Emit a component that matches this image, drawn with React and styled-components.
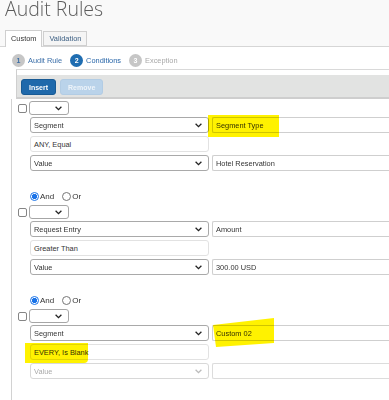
import React from "react";
import styled, { createGlobalStyle } from "styled-components";

const GlobalStyle = createGlobalStyle`
  html, body {
    margin: 0;
    padding: 0;
    background: #fff;
    overflow: hidden;
  }
  body {
    font-family: "Liberation Sans", Arial, sans-serif;
    color: #333;
  }
  * {
    box-sizing: border-box;
  }
`;

const conditions = [
  {
    join: null,
    field: "Segment",
    fieldValue: "Segment Type",
    fieldMark: "box",
    op: "ANY, Equal",
    value: "Hotel Reservation",
  },
  {
    join: "And",
    field: "Request Entry",
    fieldValue: "Amount",
    op: "Greater Than",
    value: "300.00 USD",
  },
  {
    join: "And",
    field: "Segment",
    fieldValue: "Custom 02",
    fieldMark: "slant",
    op: "EVERY, Is Blank",
    opMark: true,
    value: "",
    disabled: true,
  },
];

function Chevron({ disabled }) {
  return (
    <svg width="7" height="5" viewBox="0 0 7 5">
      <path
        d="M0.6 0.8 L3.5 3.7 L6.4 0.8"
        fill="none"
        stroke={disabled ? "#bbb" : "#222"}
        strokeWidth="1.3"
      />
    </svg>
  );
}

function Condition({ item }) {
  return (
    <ConditionBlock>
      {item.join && (
        <RadioRow>
          <Radio $checked />
          <RadioLabel>And</RadioLabel>
          <Radio />
          <RadioLabel>Or</RadioLabel>
        </RadioRow>
      )}
      <HeadRow>
        <Checkbox />
        <SmallSelect>
          <span />
          <Chevron />
        </SmallSelect>
      </HeadRow>
      <Fields>
        <FieldRow>
          <Select>
            <span>{item.field}</span>
            <Chevron />
          </Select>
          <Field>
            <Input>{item.fieldValue}</Input>
            {item.fieldMark === "box" && <MarkBox />}
            {item.fieldMark === "slant" && <MarkSlant />}
          </Field>
        </FieldRow>
        <FieldRow>
          <OpField>
            <TextBox>{item.op}</TextBox>
            {item.opMark && <MarkWide />}
          </OpField>
        </FieldRow>
        <FieldRow>
          <Select $disabled={item.disabled}>
            <span>Value</span>
            <Chevron disabled={item.disabled} />
          </Select>
          <Field>
            <Input $disabled={item.disabled}>{item.value}</Input>
          </Field>
        </FieldRow>
      </Fields>
    </ConditionBlock>
  );
}

export default function App() {
  return (
    <>
      <GlobalStyle />
      <Header>
        <Title>Audit Rules</Title>
        <Tabs>
          <Tab $active>Custom</Tab>
          <Tab>Validation</Tab>
        </Tabs>
      </Header>
      <Steps>
        <Step>
          <StepNum $state="done">1</StepNum>
          <StepLabel $state="done">Audit Rule</StepLabel>
        </Step>
        <Step>
          <StepNum $state="current">2</StepNum>
          <StepLabel $state="current">Conditions</StepLabel>
        </Step>
        <Step>
          <StepNum $state="todo">3</StepNum>
          <StepLabel $state="todo">Exception</StepLabel>
        </Step>
      </Steps>
      <Panel>
        <Toolbar>
          <Button>Insert</Button>
          <Button $disabled>Remove</Button>
        </Toolbar>
      </Panel>
      <List>
        {conditions.map((c, i) => (
          <Condition key={i} item={c} />
        ))}
      </List>
    </>
  );
}

const Header = styled.header`
  height: 47px;
  background: #f9f9f9;
  border-bottom: 1px solid #d6d6d6;
  padding-left: 5px;
  display: flex;
  flex-direction: column;
  justify-content: space-between;
`;

const Title = styled.h1`
  margin: 0;
  font-family: "Open Sans", sans-serif;
  font-weight: 300;
  font-size: 19.5px;
  line-height: 18px;
  color: #5c5c5c;
`;

const Tabs = styled.div`
  display: flex;
  align-items: flex-end;
  gap: 1px;
  margin-bottom: -1px;
`;

const Tab = styled.div`
  height: ${(p) => (p.$active ? "17px" : "15px")};
  margin-bottom: ${(p) => (p.$active ? "0" : "1px")};
  padding: 0 5px 1px;
  display: flex;
  align-items: center;
  font-size: 7.4px;
  color: ${(p) => (p.$active ? "#333" : "#3b5e82")};
  background: ${(p) => (p.$active ? "#fff" : "#f5f5f5")};
  border: 1px solid #cfcfcf;
  border-bottom: ${(p) => (p.$active ? "none" : "1px solid #cfcfcf")};
`;

const Steps = styled.div`
  height: 22px;
  padding: 4px 0 0 12px;
  display: flex;
  align-items: center;
  gap: 8px;
`;

const Step = styled.div`
  display: flex;
  align-items: center;
  gap: 3px;
`;

const StepNum = styled.span`
  width: 13px;
  height: 13px;
  border-radius: 50%;
  display: flex;
  align-items: center;
  justify-content: center;
  font-size: 7px;
  font-weight: bold;
  background: ${(p) => (p.$state === "current" ? "#1f6db1" : "#c6c6c6")};
  color: ${(p) => (p.$state === "done" ? "#3a6ea5" : "#fff")};
`;

const StepLabel = styled.span`
  font-size: 7.4px;
  color: ${(p) =>
    p.$state === "todo" ? "#a8a8a8" : p.$state === "current" ? "#2765a8" : "#3a6ea8"};
`;

const Panel = styled.div`
  margin-left: 16px;
  border-top: 1px solid #d9d9d9;
  border-left: 1px solid #cfcfcf;
  padding-top: 5px;
`;

const Toolbar = styled.div`
  height: 24px;
  background: #e2e3e2;
  border-bottom: 2px solid #cecece;
  padding: 4px 0 0 4px;
  display: flex;
  align-items: flex-start;
  gap: 4px;
`;

const Button = styled.div`
  height: 16px;
  padding: 0 7px;
  border-radius: 3px;
  display: flex;
  align-items: center;
  font-size: 7px;
  font-weight: bold;
  color: ${(p) => (p.$disabled ? "#eef4fa" : "#fff")};
  background: ${(p) => (p.$disabled ? "#bad3ea" : "#1f69ab")};
  border: 1px solid ${(p) => (p.$disabled ? "#b2cce4" : "#185a94")};
`;

const List = styled.div`
  margin-left: 11px;
  border-left: 1px solid #d2d2d2;
  padding: 2px 0 40px 6px;
`;

const ConditionBlock = styled.div`
  display: flex;
  flex-direction: column;
  & + & {
    margin-top: 19px;
  }
`;

const RadioRow = styled.div`
  height: 12px;
  margin: 0 0 3px 12px;
  display: flex;
  align-items: center;
`;

const Radio = styled.span`
  width: 9px;
  height: 9px;
  border-radius: 50%;
  border: 1px solid ${(p) => (p.$checked ? "#1a73e8" : "#767676")};
  background: ${(p) =>
    p.$checked
      ? "radial-gradient(circle, #1a73e8 0 2.4px, #fff 2.9px)"
      : "#fff"};
`;

const RadioLabel = styled.span`
  font-size: 8px;
  color: #333;
  margin: 0 8px 0 1px;
`;

const HeadRow = styled.div`
  height: 14px;
  display: flex;
  align-items: center;
`;

const Checkbox = styled.span`
  flex: none;
  width: 9px;
  height: 9px;
  border: 1px solid #858585;
  border-radius: 2px;
  background: #fff;
`;

const SelectBase = styled.div`
  flex: none;
  display: flex;
  align-items: center;
  justify-content: space-between;
  background: #fff;
  border-radius: 3px;
  font-size: 7.4px;
  white-space: nowrap;
`;

const SmallSelect = styled(SelectBase)`
  margin-left: 2px;
  width: 40px;
  height: 14px;
  padding: 0 6px 0 3px;
  border: 1px solid #a6a6a6;
`;

const Fields = styled.div`
  margin: 2px 0 0 12px;
  display: flex;
  flex-direction: column;
  gap: 3px;
`;

const FieldRow = styled.div`
  height: 16px;
  display: flex;
  gap: 3px;
`;

const Select = styled(SelectBase)`
  width: 179px;
  height: 16px;
  padding: 0 6px 0 3px;
  border: 1px solid ${(p) => (p.$disabled ? "#d8d8d8" : "#a9a9a9")};
  color: ${(p) => (p.$disabled ? "#aaa" : "#333")};
`;

const Field = styled.div`
  flex: 1;
  min-width: 0;
  position: relative;
`;

const OpField = styled.div`
  flex: none;
  position: relative;
`;

const Input = styled.div`
  width: 100%;
  height: 16px;
  padding-left: 3px;
  display: flex;
  align-items: center;
  font-size: 7.4px;
  color: #333;
  white-space: nowrap;
  background: #fff;
  border: 1px solid ${(p) => (p.$disabled ? "#dcdcdc" : "#cfcfcf")};
  border-right: none;
  border-radius: 2px 0 0 2px;
`;

const TextBox = styled(Input)`
  width: 179px;
  border: 1px solid #e2e2e2;
  border-radius: 3px;
`;

const Mark = styled.span`
  position: absolute;
  background: #fff200;
  mix-blend-mode: multiply;
  pointer-events: none;
`;

const MarkBox = styled(Mark)`
  left: -4px;
  top: -2px;
  width: 71px;
  height: 22px;
`;

const MarkSlant = styled(Mark)`
  left: 1px;
  top: -7px;
  width: 61px;
  height: 29px;
  clip-path: polygon(0 7px, 100% 0, 100% 25px, 3px 100%);
`;

const MarkWide = styled(Mark)`
  left: -5px;
  top: -1px;
  width: 63px;
  height: 20px;
  border-bottom-right-radius: 4px;
`;
